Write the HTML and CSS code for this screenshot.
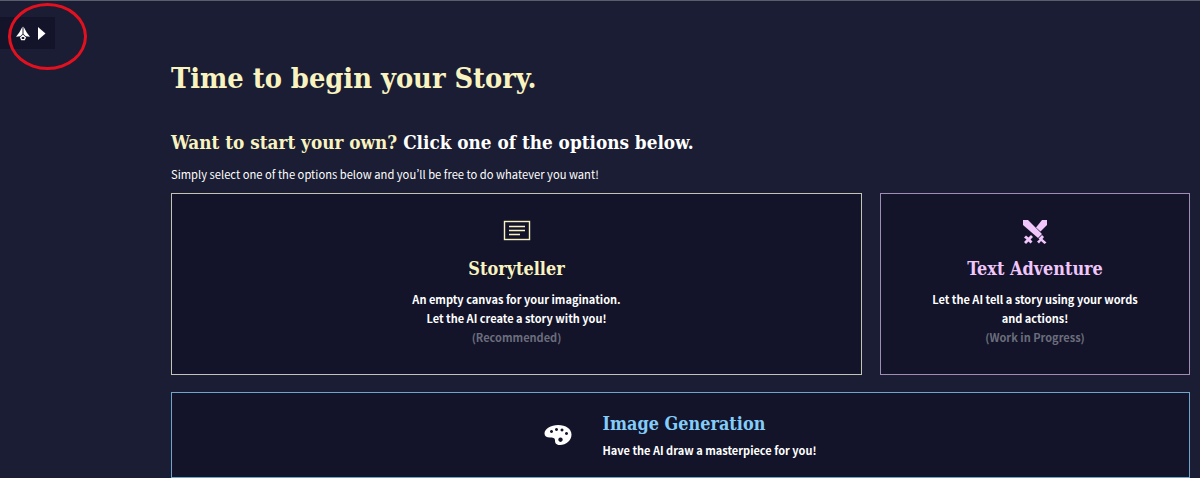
FILE: index.html
```html
<!DOCTYPE html>
<html lang="en">
<head>
  <meta charset="UTF-8" />
  <title>Time to begin your Story</title>
  <link rel="stylesheet" href="styles.css">
</head>
<body>
  <div class="sidebar-toggle">
    <svg class="logo" width="14" height="15" viewBox="0 0 15 15">
      <path d="M7 0 L7 8 L4.500 10.500 L0 11 L3.500 6.500 Z M8 0 L8 8 L10.500 10.500 L15 11 L11.500 6.500 Z" fill="#fff"/>
      <path d="M7.500 9.500 L10 12 L9 14 L6 14 L5 12 Z" fill="none" stroke="#fff" stroke-width="1.300"/>
    </svg>
    <svg class="arrow" width="8" height="13" viewBox="0 0 8 13"><path d="M0 0 L7.500 6.500 L0 13 Z" fill="#fff"/></svg>
  </div>
  <div class="annotation"></div>

  <div class="main">
    <h1>Time to begin your Story.</h1>
    <h2><span class="cream">Want to start your own?</span> Click one of the options below.</h2>
    <p class="intro">Simply select one of the options below and you’ll be free to do whatever you want!</p>

    <div class="card-row">
      <div class="card card-story">
        <svg class="icon" width="28" height="22" viewBox="0 0 28 22">
          <rect x="1.500" y="1.500" width="25" height="18" fill="none" stroke="#f9f3c0" stroke-width="1.400"/>
          <path d="M6 6.500 H22 M6 10.500 H22 M6 14.500 H17" stroke="#f9f3c0" stroke-width="1.400"/>
        </svg>
        <h3>Storyteller</h3>
        <p>An empty canvas for your imagination.<br>Let the AI create a story with you!</p>
        <p class="muted">(Recommended)</p>
      </div>
      <div class="card card-adventure">
        <svg class="icon" width="24" height="24" viewBox="0 0 24 24" fill="#f0c6fb">
          <path d="M0 0 H5 L19 14 L15 18 L0 5 Z"/>
          <path d="M24 0 V5 L17.500 11.500 L13 7.500 L19 0 Z"/>
          <path d="M8 15 L10 17 L7.500 19.500 L9.500 21.500 L7.500 23.500 L5.500 21.500 L3 24 L1 22 L3.500 19.500 L1 17.500 L3 15.500 L5.500 17.500 Z"/>
          <path d="M15.500 18.500 L19 15 L21 17 L19.500 19 L23.500 22.500 L21.500 24 L18 21 L16 23.500 L14 21.500 L16.500 19.500 Z"/>
        </svg>
        <h3>Text Adventure</h3>
        <p>Let the AI tell a story using your words<br>and actions!</p>
        <p class="muted">(Work in Progress)</p>
      </div>
    </div>

    <div class="card card-image">
      <svg class="palette" width="28" height="22" viewBox="0 0 28 22">
        <path fill="#fff" fill-rule="evenodd" d="M14 1 C22 1 27.500 5 27.500 10.500 C27.500 16.500 22 21 16 21 C11.500 21 11 18.500 11 16.500 C11 13.500 8.500 13.500 6 13.500 C2.500 13.500 0.500 12 0.500 9.500 C0.500 5 7 1 14 1 Z M12.500 4 a1.500 1.500 0 1 0 0.010 0 Z M18 4.500 a1.500 1.500 0 1 0 0.010 0 Z M22.500 8 a1.500 1.500 0 1 0 0.010 0 Z M7.500 6 a1.500 1.500 0 1 0 0.010 0 Z M16.500 13.500 a2.200 2.200 0 1 0 0.010 0 Z"/>
      </svg>
      <div class="card-text">
        <h3>Image Generation</h3>
        <p>Have the AI draw a masterpiece for you!</p>
      </div>
    </div>
  </div>
</body>
</html>
```

FILE: styles.css
```css
* {
  box-sizing: border-box;
  margin: 0;
  padding: 0;
}

html, body {
  height: 478px;
  overflow: hidden;
}

body {
  background: #1a1d33;
  border-top: 1px solid #5a5d6c;
  color: #fff;
  font-family: "Noto Sans CJK SC", "Noto Sans", sans-serif;
  font-feature-settings: "pwid";
}

.sidebar-toggle {
  position: absolute;
  top: 17px;
  left: 0;
  width: 55px;
  height: 32px;
  background: #131429;
  display: flex;
  align-items: center;
  gap: 8px;
  padding-left: 16px;
}

.annotation {
  position: absolute;
  top: 3px;
  left: 8px;
  width: 79px;
  height: 67px;
  border: 3px solid #e3111f;
  border-radius: 50%;
}

.main {
  padding: 61px 0 0 171px;
}

h1, h2, h3 {
  font-family: "DejaVu Serif", serif;
  font-stretch: condensed;
  font-weight: 700;
}

h1 {
  color: #f9f3c0;
  font-size: 28.700px;
  line-height: 32px;
}

h2 {
  margin-top: 36px;
  font-size: 18.800px;
  line-height: 24px;
}

.cream {
  color: #f9f3c0;
}

.intro {
  margin-top: 10px;
  font-size: 11.200px;
  line-height: 20px;
}

.card-row {
  display: flex;
  gap: 18px;
  margin-top: 9px;
}

.card {
  background: #131429;
  border: 1px solid;
  font-size: 11px;
  font-weight: 700;
  text-align: center;
}

.card-story,
.card-adventure {
  height: 182px;
  padding-top: 26px;
}

.card-story {
  width: 691px;
  border-color: #c4c4b4;
}

.card-adventure {
  width: 310px;
  border-color: #a08cb4;
}

.icon {
  display: block;
  margin: 0 auto;
}

.card h3 {
  font-size: 17.900px;
  line-height: 24px;
}

.card-story h3 {
  margin-top: 15px;
  color: #f9f3c0;
}

.card-adventure h3 {
  margin-top: 13px;
  color: #f0c6fb;
}

.card p {
  line-height: 18.500px;
}

.card-story h3 + p,
.card-adventure h3 + p {
  margin-top: 9px;
}

.card .muted {
  margin-top: 1px;
  color: #6b6d7c;
}

.card-image {
  display: flex;
  justify-content: center;
  align-items: center;
  gap: 30px;
  width: 1019px;
  height: 86px;
  margin-top: 17px;
  border-color: #6fa5c9;
  text-align: left;
}

.card-text {
  padding-top: 2px;
}

.card-image h3 {
  color: #84cdf9;
}

.card-image p {
  margin-top: 5px;
}
```
